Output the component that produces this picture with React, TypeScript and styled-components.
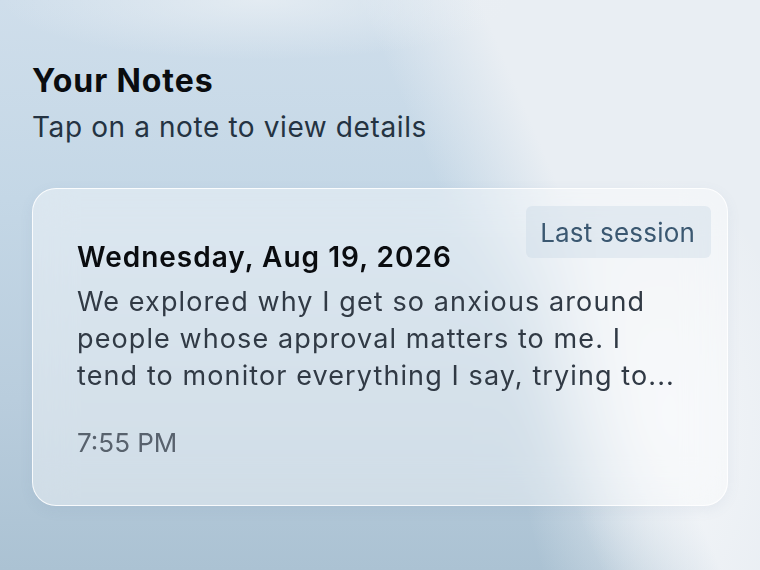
import React from 'react'
import styled, { createGlobalStyle } from 'styled-components'

const GlobalStyle = createGlobalStyle`
    html, body {
        margin: 0;
        padding: 0;
        height: 100%;
    }
    body {
        font-family: Inter, "Noto Sans", "Liberation Sans", sans-serif;
        -webkit-font-smoothing: antialiased;
    }
    #root {
        height: 100%;
    }
`

const Screen = styled.div`
    width: 760px;
    height: 570px;
    box-sizing: border-box;
    padding: 61px 32px 0 32px;
    overflow: hidden;
    background:
        radial-gradient(ellipse 140px 260px at 660px 430px, rgba(248, 249, 251, 0.75) 0%, rgba(248, 249, 251, 0) 100%),
        radial-gradient(ellipse 260px 60px at 260px 0px, rgba(236, 241, 245, 0.7) 0%, rgba(236, 241, 245, 0) 100%),
        linear-gradient(67deg, rgba(233, 238, 243, 0) 60%, rgba(233, 238, 243, 1) 72%, #e9eef3 100%),
        linear-gradient(180deg, #cfdeeb 0%, #c4d7e6 35%, #b9cddd 70%, #abc2d3 100%);
`

const Header = styled.header`
    display: flex;
    flex-direction: column;
    gap: 8px;
    margin-bottom: 43px;
`

const Title = styled.h1`
    margin: 0;
    font-size: 32px;
    font-weight: 700;
    letter-spacing: 0.9px;
    line-height: 40px;
    color: #0a0c0f;
`

const Subtitle = styled.p`
    margin: 0;
    font-size: 28px;
    font-weight: 400;
    letter-spacing: 0.6px;
    line-height: 36px;
    color: #243342;
`

const Card = styled.article`
    position: relative;
    box-sizing: border-box;
    height: 318px;
    padding: 50px 44px 0 44px;
    border-radius: 24px;
    border: 1.5px solid rgba(255, 255, 255, 0.85);
    background: rgba(255, 255, 255, 0.4);
    backdrop-filter: blur(20px);
    box-shadow: 0 4px 14px rgba(90, 120, 150, 0.08);
`

const Badge = styled.span`
    position: absolute;
    top: 17px;
    right: 16px;
    padding: 0 16px 0 14px;
    height: 52px;
    display: flex;
    align-items: center;
    border-radius: 6px;
    background: rgba(196, 212, 226, 0.35);
    font-size: 26px;
    letter-spacing: 0.2px;
    color: #3b5871;
`

const NoteDate = styled.h2`
    margin: 0;
    font-size: 28px;
    font-weight: 600;
    letter-spacing: 1px;
    line-height: 36px;
    color: #0a0c0f;
`

const Excerpt = styled.p`
    margin: 8px 0 0 0;
    font-size: 27px;
    line-height: 37px;
    letter-spacing: 1.1px;
    font-weight: 400;
    color: #313a45;
`

const NoteTime = styled.p`
    margin: 33px 0 0 0;
    font-size: 26px;
    line-height: 32px;
    color: #58626d;
`

const note = {
    date: 'Wednesday, Aug 19, 2026',
    preview: 'We explored why I get so anxious around people whose approval matters to me. I tend to monitor everything I say, trying to...',
    time: '7:55 PM'
}

export default function App() {
    return (
        <>
            <GlobalStyle />
            <Screen>
                <Header>
                    <Title>Your Notes</Title>
                    <Subtitle>Tap on a note to view details</Subtitle>
                </Header>
                <Card>
                    <Badge>Last session</Badge>
                    <NoteDate>{note.date}</NoteDate>
                    <Excerpt>{note.preview}</Excerpt>
                    <NoteTime>{note.time}</NoteTime>
                </Card>
            </Screen>
        </>
    )
}
